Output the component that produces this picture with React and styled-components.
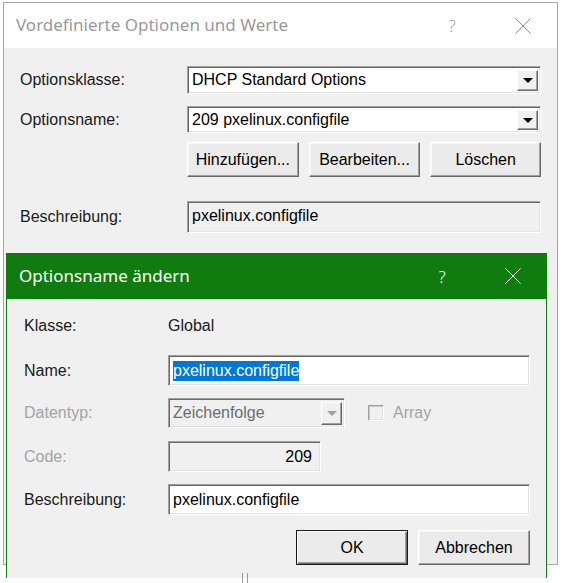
import React from 'react'
import styled, { createGlobalStyle } from 'styled-components'

const Global = createGlobalStyle`
  html, body {
    margin: 0;
    padding: 0;
    background: #ffffff;
  }
  body {
    width: 564px;
    height: 583px;
    overflow: hidden;
  }
`

const Desktop = styled.div`
  position: relative;
  width: 564px;
  height: 583px;
  padding: 2px 0 0 3px;
  box-sizing: border-box;
`

const Window = styled.div`
  width: 555px;
  height: 563px;
  border: 1px solid #a6a6a6;
  box-sizing: border-box;
  display: flex;
  flex-direction: column;
  background: #f0f0f0;
`

const TitleBar = styled.div`
  height: ${(p) => p.h}px;
  flex: none;
  display: flex;
  align-items: center;
  background: ${(p) => (p.active ? '#107c10' : '#ffffff')};
  color: ${(p) => (p.active ? '#ffffff' : '#999999')};
  font-family: 'Noto Sans', 'Open Sans', sans-serif;
  font-size: 17px;
  padding-left: ${(p) => p.pl}px;
`

const TitleText = styled.div`
  flex: 1;
  margin-top: -2px;
`

const HelpGlyph = styled.div`
  width: 20px;
  text-align: center;
  font-size: 17px;
  font-weight: 300;
  margin-right: ${(p) => p.mr}px;
`

const CloseBox = styled.div`
  width: 18px;
  height: 18px;
  margin-right: ${(p) => p.mr}px;
  display: flex;
  align-items: center;
  justify-content: center;
`

const Body = styled.div`
  flex: 1;
  display: flex;
  flex-direction: column;
  padding: ${(p) => p.pad};
`

const Row = styled.div`
  display: grid;
  grid-template-columns: ${(p) => p.col}px 1fr;
  align-items: center;
  height: ${(p) => p.h}px;
  margin-bottom: ${(p) => p.mb || 0}px;
`

const Label = styled.div`
  font-family: 'Liberation Sans', Arial, sans-serif;
  font-size: 16px;
  color: ${(p) => (p.disabled ? '#a3a3a3' : '#1a1a1a')};
`

const Value = styled.div`
  font-family: 'Liberation Sans', Arial, sans-serif;
  font-size: 16px;
  color: #1a1a1a;
`

const Field = styled.div`
  height: ${(p) => p.h}px;
  width: ${(p) => (p.w ? p.w + 'px' : 'auto')};
  box-sizing: border-box;
  border-top: 1px solid #a0a0a0;
  border-left: 1px solid #a0a0a0;
  border-right: 1px solid #ffffff;
  border-bottom: 1px solid #ffffff;
  box-shadow: inset 1px 1px 0 #696969, inset -1px -1px 0 #e3e3e3;
  background: ${(p) => (p.readOnly ? '#f0f0f0' : '#ffffff')};
  display: flex;
  align-items: ${(p) => (p.top ? 'flex-start' : 'center')};
  justify-content: ${(p) => (p.right ? 'flex-end' : 'flex-start')};
  padding: ${(p) => (p.top ? '5px 2px 0 4px' : '0 2px 0 4px')};
  font-family: 'Liberation Sans', Arial, sans-serif;
  font-size: 16px;
  color: ${(p) => (p.disabled ? '#6d6d6d' : '#000000')};
`

const FieldText = styled.span`
  flex: 1;
  text-align: ${(p) => (p.right ? 'right' : 'left')};
  padding-right: ${(p) => (p.right ? '6px' : '0')};
`

const Selected = styled.span`
  background: #0078d7;
  color: #ffffff;
  padding: 1px 0;
`

const DropButton = styled.div`
  width: 21px;
  height: calc(100% - 5px);
  box-sizing: border-box;
  background: #f0f0f0;
  border-top: 1px solid #ffffff;
  border-left: 1px solid #ffffff;
  border-right: 1px solid #696969;
  border-bottom: 1px solid #696969;
  box-shadow: inset -1px -1px 0 #a0a0a0;
  display: flex;
  align-items: center;
  justify-content: center;
  &::after {
    content: '';
    border-left: 5px solid transparent;
    border-right: 5px solid transparent;
    border-top: 5px solid ${(p) => (p.disabled ? '#a0a0a0' : '#000000')};
    margin-top: 1px;
  }
`

const ButtonRow = styled.div`
  display: flex;
  justify-content: ${(p) => (p.start ? 'flex-start' : 'flex-end')};
  gap: ${(p) => p.gap}px;
  height: 35px;
  padding-left: ${(p) => p.offset || 0}px;
  margin-bottom: ${(p) => p.mb || 0}px;
`

const Button = styled.div`
  width: ${(p) => p.w}px;
  height: 35px;
  box-sizing: border-box;
  background: #ebebeb;
  border-top: 1px solid ${(p) => (p.primary ? '#1a1a1a' : '#ffffff')};
  border-left: 1px solid ${(p) => (p.primary ? '#1a1a1a' : '#ffffff')};
  border-right: 1px solid ${(p) => (p.primary ? '#1a1a1a' : '#696969')};
  border-bottom: 1px solid ${(p) => (p.primary ? '#1a1a1a' : '#696969')};
  box-shadow: ${(p) =>
    p.primary
      ? 'inset 1px 1px 0 #ffffff, inset -1px -1px 0 #696969, inset -2px -2px 0 #a0a0a0'
      : 'inset -1px -1px 0 #a0a0a0, inset 1px 1px 0 #f7f7f7'};
  display: flex;
  align-items: center;
  justify-content: center;
  font-family: 'Liberation Sans', Arial, sans-serif;
  font-size: 16px;
  color: #000000;
`

const ControlGroup = styled.div`
  display: flex;
  align-items: center;
`

const Check = styled.div`
  width: 16px;
  height: 16px;
  box-sizing: border-box;
  margin-left: 23px;
  border-top: 1px solid #a0a0a0;
  border-left: 1px solid #a0a0a0;
  border-right: 1px solid #ffffff;
  border-bottom: 1px solid #ffffff;
  box-shadow: inset 1px 1px 0 #c8c8c8, inset -1px -1px 0 #e3e3e3;
  background: #f0f0f0;
`

const CheckLabel = styled.span`
  margin-left: 9px;
  font-family: 'Liberation Sans', Arial, sans-serif;
  font-size: 16px;
  color: #a3a3a3;
`

const Child = styled.div`
  position: absolute;
  left: 6px;
  top: 253px;
  width: 541px;
  height: 325px;
  box-sizing: border-box;
  border-left: 1px solid #107c10;
  border-right: 1px solid #107c10;
  background: #f0f0f0;
  display: flex;
  flex-direction: column;
`

const Grip = styled.div`
  position: absolute;
  left: 242px;
  top: 573px;
  width: 4px;
  height: 10px;
  border-left: 1px solid #9a9a9a;
  border-right: 1px solid #9a9a9a;
`

const CloseIcon = ({ color }) => (
  <svg width="16" height="16" viewBox="0 0 16 16">
    <path d="M0.5 0.5 L15.5 15.5 M15.5 0.5 L0.5 15.5" stroke={color} strokeWidth="1" fill="none" />
  </svg>
)

const Combo = ({ text, w, h, disabled }) => (
  <Field h={h} w={w} readOnly={disabled} disabled={disabled}>
    <FieldText>{text}</FieldText>
    <DropButton disabled={disabled} />
  </Field>
)

export default function App() {
  return (
    <Desktop>
      <Global />
      <Window>
        <TitleBar h={45} pl={12}>
          <TitleText>Vordefinierte Optionen und Werte</TitleText>
          <HelpGlyph mr={52}>?</HelpGlyph>
          <CloseBox mr={25}>
            <CloseIcon color="#8a8a8a" />
          </CloseBox>
        </TitleBar>
        <Body pad="18px 16px 0 16px">
          <Row col={167} h={28} mb={12}>
            <Label>Optionsklasse:</Label>
            <Combo text="DHCP Standard Options" h={28} />
          </Row>
          <Row col={167} h={27} mb={9}>
            <Label>Optionsname:</Label>
            <Combo text="209 pxelinux.configfile" h={27} />
          </Row>
          <ButtonRow gap={10} mb={24} offset={167} start>
            <Button w={112}>Hinzufügen...</Button>
            <Button w={112}>Bearbeiten...</Button>
            <Button w={111}>Löschen</Button>
          </ButtonRow>
          <Row col={167} h={32}>
            <Label>Beschreibung:</Label>
            <Field h={32} readOnly top>
              pxelinux.configfile
            </Field>
          </Row>
        </Body>
      </Window>

      <Child>
        <TitleBar h={46} pl={12} active>
          <TitleText>Optionsname ändern</TitleText>
          <HelpGlyph mr={52}>?</HelpGlyph>
          <CloseBox mr={24}>
            <CloseIcon color="#ffffff" />
          </CloseBox>
        </TitleBar>
        <Body pad="17px 16px 0 17px">
          <Row col={144} h={20} mb={19}>
            <Label>Klasse:</Label>
            <Value>Global</Value>
          </Row>
          <Row col={144} h={31} mb={12}>
            <Label>Name:</Label>
            <Field h={31}>
              <Selected>pxelinux.configfile</Selected>
            </Field>
          </Row>
          <Row col={144} h={30} mb={13}>
            <Label disabled>Datentyp:</Label>
            <ControlGroup>
              <Combo text="Zeichenfolge" w={177} h={30} disabled />
              <Check />
              <CheckLabel>Array</CheckLabel>
            </ControlGroup>
          </Row>
          <Row col={144} h={31} mb={12}>
            <Label disabled>Code:</Label>
            <Field h={31} w={153} readOnly right>
              <FieldText right>209</FieldText>
            </Field>
          </Row>
          <Row col={144} h={31} mb={15}>
            <Label>Beschreibung:</Label>
            <Field h={31}>pxelinux.configfile</Field>
          </Row>
          <ButtonRow gap={10}>
            <Button w={112} primary>OK</Button>
            <Button w={112}>Abbrechen</Button>
          </ButtonRow>
        </Body>
      </Child>
      <Grip />
    </Desktop>
  )
}
